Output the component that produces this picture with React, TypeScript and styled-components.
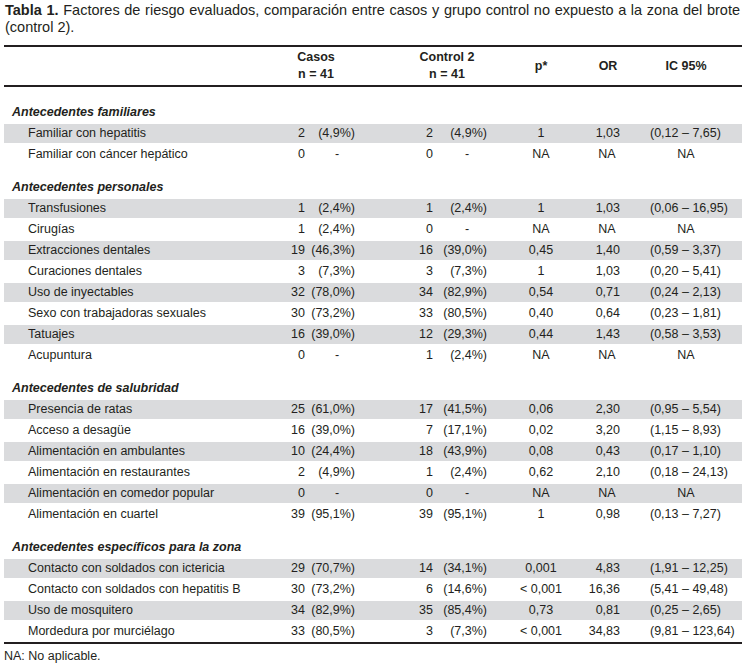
import React from "react";
import styled, { createGlobalStyle } from "styled-components";

const Global = createGlobalStyle`
  html, body { margin: 0; padding: 0; background: #fff; }
  body { font-family: "Liberation Sans", Arial, sans-serif; color: #231f20; }
`;

const Page = styled.div`
  width: 750px;
  height: 665px;
  overflow: hidden;
`;

const Caption = styled.p`
  margin: 0 0 9px;
  padding: 2px 0 0 5px;
  width: 735px;
  height: 34px;
  font-size: 14.5px;
  line-height: 17px;
  text-align: justify;
`;

const Bold = styled.b`
  font-weight: 700;
`;

const Table = styled.div`
  margin-left: 4px;
  width: 738px;
  font-size: 12.5px;
`;

const COLS = "266px 35px 53px 75px 57px 90px 42px 120px";

const HeadRow = styled.div`
  display: grid;
  grid-template-columns: ${COLS};
  height: 38px;
  box-sizing: content-box;
  border-top: 2px solid #231f20;
  border-bottom: 2px solid #231f20;
  margin-bottom: 15px;
  font-weight: 700;
`;

const HeadCell = styled.div<{ $span?: number; $pl?: number; $pr?: number }>`
  grid-column: span ${(p) => p.$span ?? 1};
  display: flex;
  flex-direction: column;
  justify-content: center;
  align-items: center;
  padding-left: ${(p) => p.$pl ?? 0}px;
  padding-right: ${(p) => p.$pr ?? 0}px;
  line-height: 17px;
  white-space: nowrap;
`;

const Section = styled.div<{ $last?: boolean }>`
  margin-bottom: ${(p) => (p.$last ? 0 : 12)}px;
`;

const SectionTitle = styled.div`
  height: 21px;
  line-height: 21px;
  padding-left: 8px;
  font-weight: 700;
  font-style: italic;
`;

const Row = styled.div<{ $shade: boolean }>`
  display: grid;
  grid-template-columns: ${COLS};
  height: 21px;
  box-sizing: border-box;
  border-top: 1px solid #fff;
  border-bottom: 1px solid #fff;
  background: ${(p) => (p.$shade ? "#dadbdd" : "#fff")};
  line-height: 19px;
  white-space: nowrap;
`;

const Label = styled.div`
  padding-left: 24px;
`;

const Cell = styled.div<{ $align: "left" | "right" | "center"; $pl?: number; $pr?: number }>`
  text-align: ${(p) => p.$align};
  padding-left: ${(p) => p.$pl ?? 0}px;
  padding-right: ${(p) => p.$pr ?? 0}px;
`;

const BottomRule = styled.div`
  border-top: 2px solid #231f20;
`;

const Note = styled.div`
  margin-top: 4px;
  padding-left: 4px;
  font-size: 12.5px;
  line-height: 17px;
`;

type RowData = [string, string, string, string, string, string, string, string];

const sections: { title: string; rows: RowData[] }[] = [
  {
    title: "Antecedentes familiares",
    rows: [
      ["Familiar con hepatitis", "2", "(4,9%)", "2", "(4,9%)", "1", "1,03", "(0,12 – 7,65)"],
      ["Familiar con cáncer hepático", "0", "-", "0", "-", "NA", "NA", "NA"],
    ],
  },
  {
    title: "Antecedentes personales",
    rows: [
      ["Transfusiones", "1", "(2,4%)", "1", "(2,4%)", "1", "1,03", "(0,06 – 16,95)"],
      ["Cirugías", "1", "(2,4%)", "0", "-", "NA", "NA", "NA"],
      ["Extracciones dentales", "19", "(46,3%)", "16", "(39,0%)", "0,45", "1,40", "(0,59 – 3,37)"],
      ["Curaciones dentales", "3", "(7,3%)", "3", "(7,3%)", "1", "1,03", "(0,20 – 5,41)"],
      ["Uso de inyectables", "32", "(78,0%)", "34", "(82,9%)", "0,54", "0,71", "(0,24 – 2,13)"],
      ["Sexo con trabajadoras sexuales", "30", "(73,2%)", "33", "(80,5%)", "0,40", "0,64", "(0,23 – 1,81)"],
      ["Tatuajes", "16", "(39,0%)", "12", "(29,3%)", "0,44", "1,43", "(0,58 – 3,53)"],
      ["Acupuntura", "0", "-", "1", "(2,4%)", "NA", "NA", "NA"],
    ],
  },
  {
    title: "Antecedentes de salubridad",
    rows: [
      ["Presencia de ratas", "25", "(61,0%)", "17", "(41,5%)", "0,06", "2,30", "(0,95 – 5,54)"],
      ["Acceso a desagüe", "16", "(39,0%)", "7", "(17,1%)", "0,02", "3,20", "(1,15 – 8,93)"],
      ["Alimentación en ambulantes", "10", "(24,4%)", "18", "(43,9%)", "0,08", "0,43", "(0,17 – 1,10)"],
      ["Alimentación en restaurantes", "2", "(4,9%)", "1", "(2,4%)", "0,62", "2,10", "(0,18 – 24,13)"],
      ["Alimentación en comedor popular", "0", "-", "0", "-", "NA", "NA", "NA"],
      ["Alimentación en cuartel", "39", "(95,1%)", "39", "(95,1%)", "1", "0,98", "(0,13 – 7,27)"],
    ],
  },
  {
    title: "Antecedentes específicos para la zona",
    rows: [
      ["Contacto con soldados con ictericia", "29", "(70,7%)", "14", "(34,1%)", "0,001", "4,83", "(1,91 – 12,25)"],
      ["Contacto con soldados con hepatitis B", "30", "(73,2%)", "6", "(14,6%)", "< 0,001", "16,36", "(5,41 – 49,48)"],
      ["Uso de mosquitero", "34", "(82,9%)", "35", "(85,4%)", "0,73", "0,81", "(0,25 – 2,65)"],
      ["Mordedura por murciélago", "33", "(80,5%)", "3", "(7,3%)", "< 0,001", "34,83", "(9,81 – 123,64)"],
    ],
  },
];

const Pct = ({ v }: { v: string }) =>
  v === "-" ? (
    <Cell $align="center" $pl={11}>
      {v}
    </Cell>
  ) : (
    <Cell $align="right" $pr={3}>
      {v}
    </Cell>
  );

const DataRow = ({ r, shade }: { r: RowData; shade: boolean }) => {
  const [label, cn, cp, kn, kp, p, or, ic] = r;
  return (
    <Row $shade={shade}>
      <Label>{label}</Label>
      <Cell $align="right">{cn}</Cell>
      <Pct v={cp} />
      <Cell $align="right">{kn}</Cell>
      <Pct v={kp} />
      <Cell $align="center" $pl={12}>
        {p}
      </Cell>
      {or === "NA" ? (
        <Cell $align="center" $pl={12}>
          {or}
        </Cell>
      ) : (
        <Cell $align="right" $pr={2}>
          {or}
        </Cell>
      )}
      {ic === "NA" ? (
        <Cell $align="center" $pl={8}>
          {ic}
        </Cell>
      ) : (
        <Cell $align="left" $pl={28}>
          {ic}
        </Cell>
      )}
    </Row>
  );
};

export default function App() {
  return (
    <Page>
      <Global />
      <Caption>
        <Bold>Tabla 1.</Bold> Factores de riesgo evaluados, comparación entre casos y grupo control no
        expuesto a la zona del brote (control 2).
      </Caption>
      <Table>
        <HeadRow>
          <div />
          <HeadCell $span={2} $pl={4}>
            <span>Casos</span>
            <span>n = 41</span>
          </HeadCell>
          <HeadCell $span={2} $pl={46}>
            <span>Control 2</span>
            <span>n = 41</span>
          </HeadCell>
          <HeadCell $pl={12}>p*</HeadCell>
          <HeadCell $pl={14}>OR</HeadCell>
          <HeadCell $pl={8}>IC 95%</HeadCell>
        </HeadRow>
        {sections.map((s, si) => (
          <Section key={s.title} $last={si === sections.length - 1}>
            <SectionTitle>{s.title}</SectionTitle>
            {s.rows.map((r, i) => (
              <DataRow key={r[0]} r={r} shade={i % 2 === 0} />
            ))}
          </Section>
        ))}
        <BottomRule />
      </Table>
      <Note>NA: No aplicable.</Note>
    </Page>
  );
}
